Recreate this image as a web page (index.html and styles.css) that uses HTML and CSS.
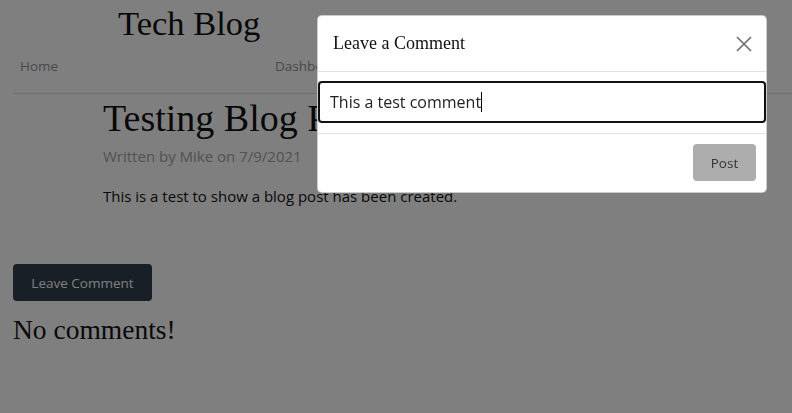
FILE: index.html
```html
<!DOCTYPE html>
<html>
<head>
<meta charset="utf-8">
<link rel="stylesheet" href="styles.css">
</head>
<body>
<header class="site-header">
  <h1 class="site-title">Tech Blog</h1>
  <nav class="nav">
    <a class="nav-link" href="#">Home</a>
    <a class="nav-link" href="#">Dashboard</a>
    <a class="nav-link" href="#">Logout</a>
  </nav>
</header>
<main class="main">
  <article class="post">
    <h2 class="post-title">Testing Blog Post</h2>
    <p class="post-meta">Written by Mike on 7/9/2021</p>
    <p class="post-body">This is a test to show a blog post has been created.</p>
  </article>
  <button class="btn-dark">Leave Comment</button>
  <h3 class="no-comments">No comments!</h3>
</main>

<div class="backdrop"></div>
<div class="modal">
  <div class="modal-header">
    <h5 class="modal-title">Leave a Comment</h5>
    <button class="close" aria-label="Close">
      <svg width="16" height="16" viewBox="0 0 16 16"><path d="M1 1L15 15M15 1L1 15" stroke="#6c6c6c" stroke-width="1.6" fill="none"/></svg>
    </button>
  </div>
  <div class="modal-body">
    <div class="input">This a test comment<span class="caret"></span></div>
  </div>
  <div class="modal-footer">
    <button class="btn-post">Post</button>
  </div>
</div>
</body>
</html>
```
FILE: styles.css
```css
html, body { margin: 0; padding: 0; }
body {
  width: 792px;
  height: 413px;
  background: #fff;
  font-family: "Open Sans", "Noto Sans", sans-serif;
  color: #212529;
  overflow: hidden;
}
.site-header {
  margin-left: 13px;
  border-bottom: 1px solid #dcdcdc;
  height: 93px;
}
.site-title {
  margin: 0;
  padding: 3px 0 0 105px;
  font-family: "Liberation Serif", serif;
  font-weight: normal;
  font-size: 34.5px;
  line-height: 40px;
  color: #111;
}
.nav {
  display: flex;
  padding: 13px 7px 0 7px;
}
.nav-link {
  flex: 1;
  font-size: 13.5px;
  line-height: 20px;
  color: #8c939a;
  text-decoration: none;
}
.main { padding: 0 0 0 13px; }
.post { padding-left: 90px; }
.post-title {
  margin: 2px 0 0 0;
  font-family: "Liberation Serif", serif;
  font-weight: normal;
  font-size: 38px;
  line-height: 44px;
  color: #111;
}
.post-meta {
  margin: 5px 0 0 0;
  font-size: 15px;
  line-height: 22px;
  color: #a4a4a4;
}
.post-body {
  margin: 18px 0 0 0;
  font-size: 15px;
  line-height: 22px;
  color: #111;
}
.btn-dark {
  margin-top: 57px;
  display: block;
  width: 139px;
  height: 37px;
  border: none;
  border-radius: 4px;
  background: #323e4e;
  color: #fdfdfd;
  font-family: "Open Sans", "Noto Sans", sans-serif;
  font-size: 13.5px;
  padding: 0;
}
.no-comments {
  margin: 12px 0 0 0;
  font-family: "Liberation Serif", serif;
  font-weight: normal;
  font-size: 27.5px;
  line-height: 34px;
  color: #111;
}
.backdrop {
  position: fixed;
  inset: 0;
  background: rgba(0,0,0,0.5);
}
.modal {
  position: fixed;
  left: 317px;
  top: 15px;
  width: 448px;
  background: #fff;
  border: 1px solid rgba(0,0,0,0.2);
  border-radius: 5px;
  box-sizing: content-box;
}
.modal-header {
  height: 55px;
  display: flex;
  align-items: center;
  justify-content: space-between;
  padding: 0 12px 0 15px;
  border-bottom: 1px solid #dee2e6;
}
.modal-title {
  margin: 0;
  font-family: "Liberation Serif", serif;
  font-weight: normal;
  font-size: 18px;
  color: #111;
}
.close {
  background: none;
  border: none;
  padding: 0;
  width: 16px;
  height: 16px;
  margin-right: 2px;
  display: flex;
}
.modal-body { padding: 9px 0 10px 0; }
.input {
  height: 38px;
  border: 2px solid #111;
  border-radius: 4px;
  padding: 0 10px;
  display: flex;
  align-items: center;
  font-size: 16px;
  color: #222;
}
.caret {
  display: inline-block;
  width: 1px;
  height: 20px;
  background: #000;
}
.modal-footer {
  border-top: 1px solid #dee2e6;
  display: flex;
  justify-content: flex-end;
  padding: 10px 10px 11px 0;
}
.btn-post {
  width: 63px;
  height: 37px;
  border: none;
  border-radius: 4px;
  background: #adadad;
  color: #333;
  font-family: "Open Sans", "Noto Sans", sans-serif;
  font-size: 13.5px;
  padding: 0;
}
```
